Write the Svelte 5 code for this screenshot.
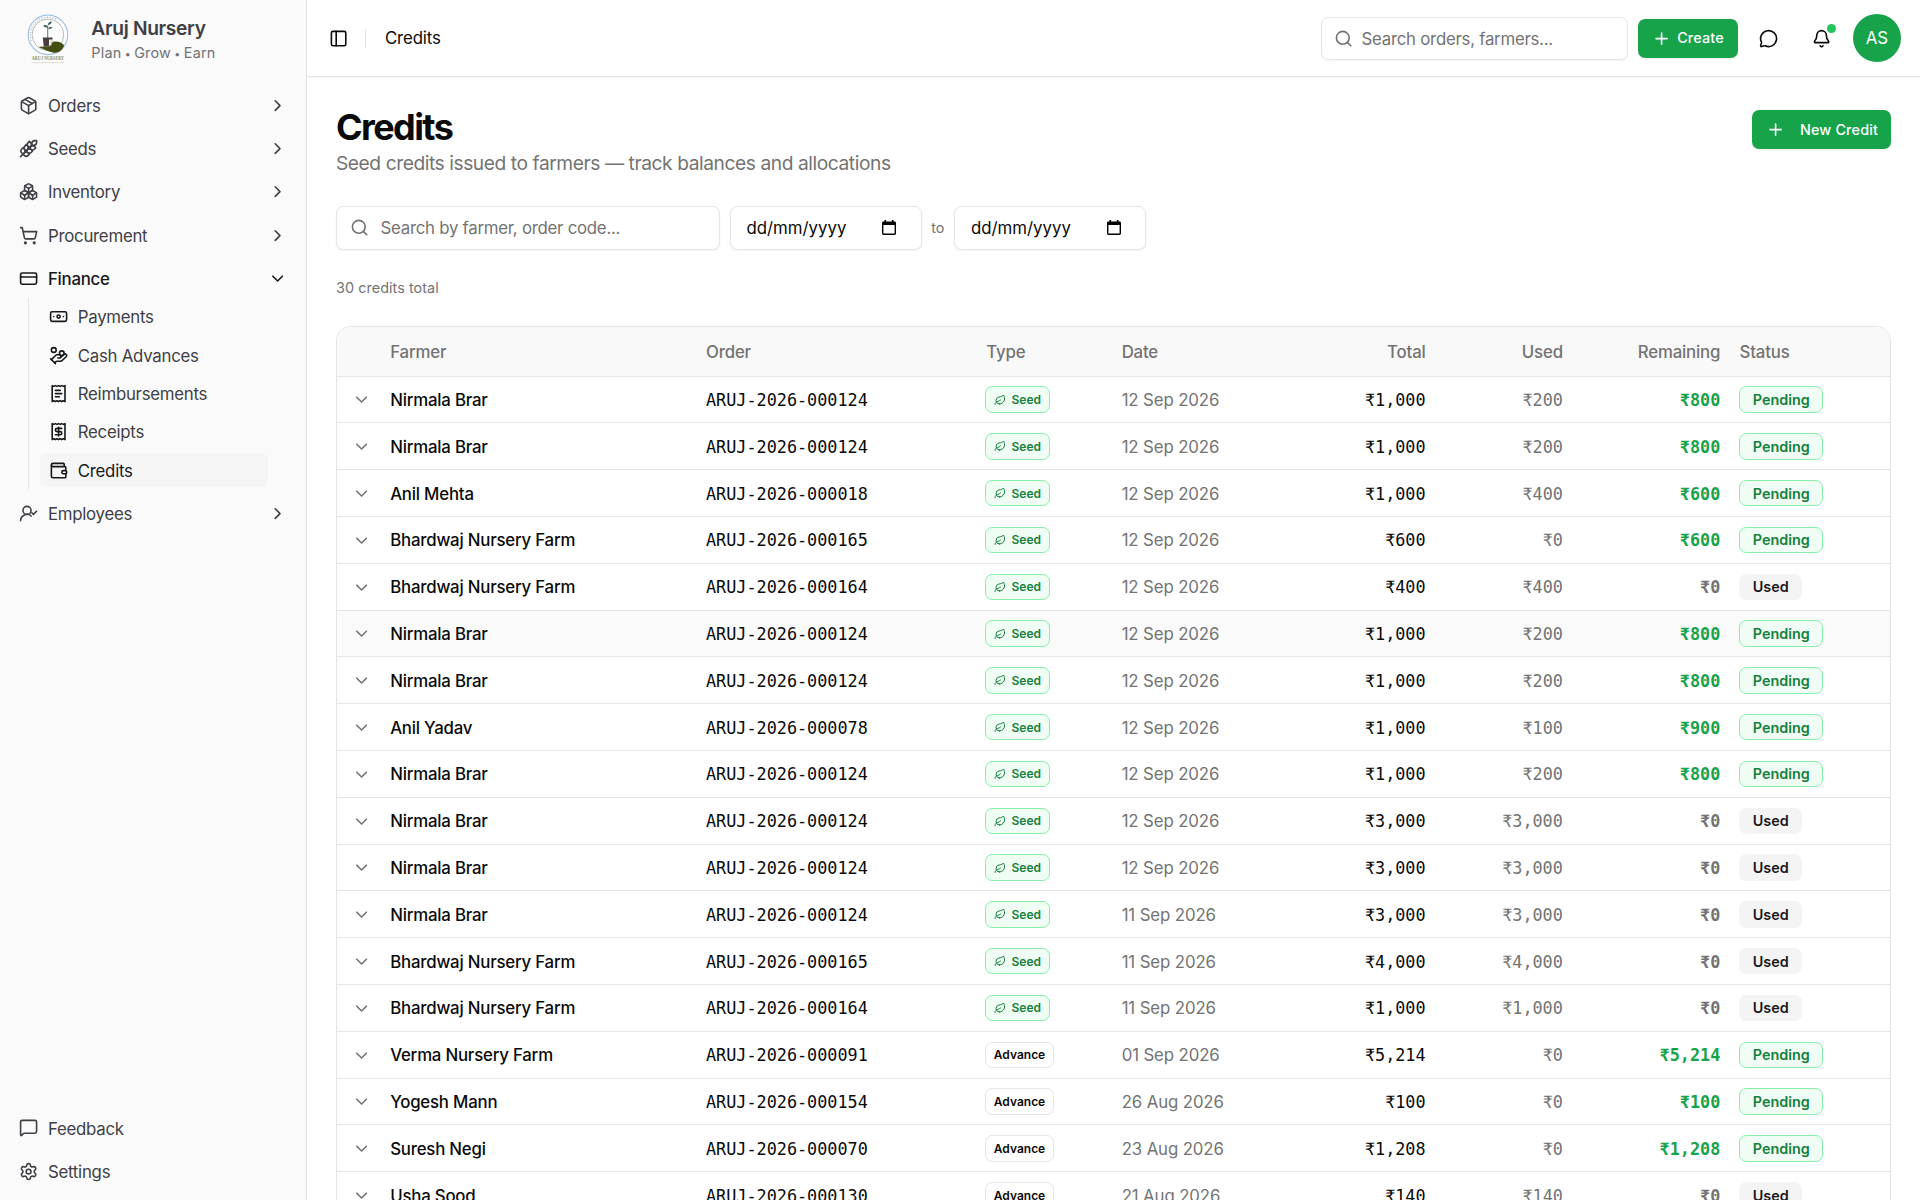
<script lang="ts">
  interface Credit {
    farmer: string;
    order: string;
    type: 'Seed' | 'Advance';
    date: string;
    total: number;
    used: number;
  }

  const icons: Record<string, string> = {
    package: '<path d="M11 21.73a2 2 0 0 0 2 0l7-4A2 2 0 0 0 21 16V8a2 2 0 0 0-1-1.73l-7-4a2 2 0 0 0-2 0l-7 4A2 2 0 0 0 3 8v8a2 2 0 0 0 1 1.73z"/><path d="M12 22V12"/><path d="m3.3 7 8.7 5 8.7-5"/><path d="m7.5 4.27 9 5.15"/>',
    wheat: '<path d="M2 22 16 8"/><path d="M3.47 12.53 5 11l1.53 1.53a3.5 3.5 0 0 1 0 4.94L5 19l-1.53-1.53a3.5 3.5 0 0 1 0-4.94Z"/><path d="M7.47 8.53 9 7l1.53 1.53a3.5 3.5 0 0 1 0 4.94L9 15l-1.53-1.53a3.5 3.5 0 0 1 0-4.94Z"/><path d="M11.47 4.53 13 3l1.53 1.53a3.5 3.5 0 0 1 0 4.94L13 11l-1.53-1.53a3.5 3.5 0 0 1 0-4.94Z"/><path d="M20 2h2v2a4 4 0 0 1-4 4h-2V6a4 4 0 0 1 4-4Z"/><path d="M11.47 17.47 13 19l-1.53 1.53a3.5 3.5 0 0 1-4.94 0L5 19l1.53-1.53a3.5 3.5 0 0 1 4.94 0Z"/><path d="M15.47 13.47 17 15l-1.53 1.53a3.5 3.5 0 0 1-4.94 0L9 15l1.53-1.53a3.5 3.5 0 0 1 4.94 0Z"/><path d="M19.47 9.47 21 11l-1.53 1.53a3.5 3.5 0 0 1-4.94 0L13 11l1.53-1.53a3.5 3.5 0 0 1 4.94 0Z"/>',
    boxes: '<path d="M2.97 12.92A2 2 0 0 0 2 14.63v3.24a2 2 0 0 0 .97 1.71l3 1.8a2 2 0 0 0 2.06 0L12 19v-5.5l-5-3-4.03 2.42Z"/><path d="m7 16.5-4.74-2.85"/><path d="m7 16.5 5-3"/><path d="M7 16.5v5.17"/><path d="M12 13.5V19l3.97 2.38a2 2 0 0 0 2.06 0l3-1.8a2 2 0 0 0 .97-1.71v-3.24a2 2 0 0 0-.97-1.71L17 10.5l-5 3Z"/><path d="m17 16.5-5-3"/><path d="m17 16.5 4.74-2.85"/><path d="M17 16.5v5.17"/><path d="M7.97 4.42A2 2 0 0 0 7 6.13v4.37l5 3 5-3V6.13a2 2 0 0 0-.97-1.71l-3-1.8a2 2 0 0 0-2.06 0l-3 1.8Z"/><path d="M12 8 7.26 5.15"/><path d="m12 8 4.74-2.85"/><path d="M12 13.5V8"/>',
    cart: '<circle cx="8" cy="21" r="1"/><circle cx="19" cy="21" r="1"/><path d="M2.05 2.05h2l2.66 12.42a2 2 0 0 0 2 1.58h9.78a2 2 0 0 0 1.95-1.57l1.65-7.43H5.12"/>',
    card: '<rect width="20" height="14" x="2" y="5" rx="2"/><path d="M2 10h20"/>',
    banknote: '<rect width="20" height="12" x="2" y="6" rx="2"/><circle cx="12" cy="12" r="2"/><path d="M6 12h.01M18 12h.01"/>',
    handCoins: '<path d="M11 15h2a2 2 0 1 0 0-4h-3c-.6 0-1.1.2-1.4.6L3 17"/><path d="m7 21 1.6-1.4c.3-.4.8-.6 1.4-.6h4c1.1 0 2.1-.4 2.8-1.2l4.6-4.4a2 2 0 0 0-2.75-2.91l-4.2 3.9"/><path d="m2 16 6 6"/><circle cx="16" cy="9" r="2.9"/><circle cx="6" cy="5" r="3"/>',
    receiptText: '<path d="M4 2v20l2-1 2 1 2-1 2 1 2-1 2 1 2-1 2 1V2l-2 1-2-1-2 1-2-1-2 1-2-1-2 1Z"/><path d="M14 8H8"/><path d="M16 12H8"/><path d="M13 16H8"/>',
    receipt: '<path d="M4 2v20l2-1 2 1 2-1 2 1 2-1 2 1 2-1 2 1V2l-2 1-2-1-2 1-2-1-2 1-2-1-2 1Z"/><path d="M16 8h-6a2 2 0 1 0 0 4h4a2 2 0 1 1 0 4H8"/><path d="M12 17.5v-11"/>',
    wallet: '<path d="M19 7V4a1 1 0 0 0-1-1H5a2 2 0 0 0 0 4h15a1 1 0 0 1 1 1v4h-3a2 2 0 0 0 0 4h3a1 1 0 0 0 1-1v-2a1 1 0 0 0-1-1"/><path d="M3 5v14a2 2 0 0 0 2 2h15a1 1 0 0 0 1-1v-4"/>',
    userCheck: '<path d="M2 21a8 8 0 0 1 13.292-6"/><circle cx="10" cy="8" r="5"/><path d="m16 11 2 2 4-4"/>',
    message: '<path d="M22 17a2 2 0 0 1-2 2H6.828a2 2 0 0 0-1.414.586l-2.202 2.202A.71.71 0 0 1 2 21.286V5a2 2 0 0 1 2-2h16a2 2 0 0 1 2 2z"/>',
    settings: '<path d="M9.671 4.136a2.34 2.34 0 0 1 4.659 0 2.34 2.34 0 0 0 3.319 1.915 2.34 2.34 0 0 1 2.33 4.033 2.34 2.34 0 0 0 0 3.831 2.34 2.34 0 0 1-2.33 4.033 2.34 2.34 0 0 0-3.319 1.915 2.34 2.34 0 0 1-4.659 0 2.34 2.34 0 0 0-3.32-1.915 2.34 2.34 0 0 1-2.33-4.033 2.34 2.34 0 0 0 0-3.831A2.34 2.34 0 0 1 6.35 6.051a2.34 2.34 0 0 0 3.319-1.915"/><circle cx="12" cy="12" r="3"/>',
    chevronRight: '<path d="m9 18 6-6-6-6"/>',
    chevronDown: '<path d="m6 9 6 6 6-6"/>',
    panel: '<rect width="18" height="18" x="3" y="3" rx="2"/><path d="M9 3v18"/>',
    search: '<path d="m21 21-4.34-4.34"/><circle cx="11" cy="11" r="8"/>',
    plus: '<path d="M5 12h14"/><path d="M12 5v14"/>',
    chat: '<path d="M2.992 16.342a2 2 0 0 1 .094 1.167l-1.065 3.29a1 1 0 0 0 1.236 1.168l3.413-.998a2 2 0 0 1 1.099.092 10 10 0 1 0-4.777-4.719"/>',
    bell: '<path d="M10.268 21a2 2 0 0 0 3.464 0"/><path d="M3.262 15.326A1 1 0 0 0 4 17h16a1 1 0 0 0 .74-1.673C19.41 13.956 18 12.499 18 8A6 6 0 0 0 6 8c0 4.499-1.411 5.956-2.738 7.326"/>',
    leaf: '<path d="M11 20A7 7 0 0 1 9.8 6.1C15.5 5 17 4.48 19 2c1 2 2 4.18 2 8 0 5.5-4.78 10-10 10Z"/><path d="M2 21c0-3 1.85-5.36 5.08-6C9.5 14.52 12 13 13 12"/>'
  };

  const mainNav = [
    { label: 'Orders', icon: 'package' },
    { label: 'Seeds', icon: 'wheat' },
    { label: 'Inventory', icon: 'boxes' },
    { label: 'Procurement', icon: 'cart' },
    {
      label: 'Finance',
      icon: 'card',
      children: [
        { label: 'Payments', icon: 'banknote' },
        { label: 'Cash Advances', icon: 'handCoins' },
        { label: 'Reimbursements', icon: 'receiptText' },
        { label: 'Receipts', icon: 'receipt' },
        { label: 'Credits', icon: 'wallet' }
      ]
    },
    { label: 'Employees', icon: 'userCheck' }
  ];

  const footerNav = [
    { label: 'Feedback', icon: 'message' },
    { label: 'Settings', icon: 'settings' }
  ];

  const credits: Credit[] = [
    { farmer: 'Nirmala Brar', order: 'ARUJ-2026-000124', type: 'Seed', date: '12 Sep 2026', total: 1000, used: 200 },
    { farmer: 'Nirmala Brar', order: 'ARUJ-2026-000124', type: 'Seed', date: '12 Sep 2026', total: 1000, used: 200 },
    { farmer: 'Anil Mehta', order: 'ARUJ-2026-000018', type: 'Seed', date: '12 Sep 2026', total: 1000, used: 400 },
    { farmer: 'Bhardwaj Nursery Farm', order: 'ARUJ-2026-000165', type: 'Seed', date: '12 Sep 2026', total: 600, used: 0 },
    { farmer: 'Bhardwaj Nursery Farm', order: 'ARUJ-2026-000164', type: 'Seed', date: '12 Sep 2026', total: 400, used: 400 },
    { farmer: 'Nirmala Brar', order: 'ARUJ-2026-000124', type: 'Seed', date: '12 Sep 2026', total: 1000, used: 200 },
    { farmer: 'Nirmala Brar', order: 'ARUJ-2026-000124', type: 'Seed', date: '12 Sep 2026', total: 1000, used: 200 },
    { farmer: 'Anil Yadav', order: 'ARUJ-2026-000078', type: 'Seed', date: '12 Sep 2026', total: 1000, used: 100 },
    { farmer: 'Nirmala Brar', order: 'ARUJ-2026-000124', type: 'Seed', date: '12 Sep 2026', total: 1000, used: 200 },
    { farmer: 'Nirmala Brar', order: 'ARUJ-2026-000124', type: 'Seed', date: '12 Sep 2026', total: 3000, used: 3000 },
    { farmer: 'Nirmala Brar', order: 'ARUJ-2026-000124', type: 'Seed', date: '12 Sep 2026', total: 3000, used: 3000 },
    { farmer: 'Nirmala Brar', order: 'ARUJ-2026-000124', type: 'Seed', date: '11 Sep 2026', total: 3000, used: 3000 },
    { farmer: 'Bhardwaj Nursery Farm', order: 'ARUJ-2026-000165', type: 'Seed', date: '11 Sep 2026', total: 4000, used: 4000 },
    { farmer: 'Bhardwaj Nursery Farm', order: 'ARUJ-2026-000164', type: 'Seed', date: '11 Sep 2026', total: 1000, used: 1000 },
    { farmer: 'Verma Nursery Farm', order: 'ARUJ-2026-000091', type: 'Advance', date: '01 Sep 2026', total: 5214, used: 0 },
    { farmer: 'Yogesh Mann', order: 'ARUJ-2026-000154', type: 'Advance', date: '26 Aug 2026', total: 100, used: 0 },
    { farmer: 'Suresh Negi', order: 'ARUJ-2026-000070', type: 'Advance', date: '23 Aug 2026', total: 1208, used: 0 },
    { farmer: 'Usha Sood', order: 'ARUJ-2026-000130', type: 'Advance', date: '21 Aug 2026', total: 140, used: 140 }
  ];

  let openGroup = $state('Finance');
  let activeItem = $state('Credits');
  let highlightedRow = $state(5);

  function toggleGroup(label: string) {
    openGroup = openGroup === label ? '' : label;
  }

  function rupees(value: number) {
    return '₹' + value.toLocaleString('en-IN');
  }
</script>

{#snippet icon(name: string, cls = '')}
  <svg class="icon {cls}" viewBox="0 0 24 24">{@html icons[name]}</svg>
{/snippet}

{#snippet dateField()}
  <div class="field date-field">
    <span>dd/mm/yyyy</span>
    <svg class="calendar" viewBox="0 0 14 15">
      <path fill-rule="evenodd" d="M2.5 0h1.6v1.4h5.8V0h1.6v1.4h1.1A1.4 1.4 0 0 1 14 2.8v10.8a1.4 1.4 0 0 1-1.4 1.4H1.4A1.4 1.4 0 0 1 0 13.6V2.8A1.4 1.4 0 0 1 1.4 1.4h1.1zM1.4 5v8.6h11.200V5z" />
    </svg>
  </div>
{/snippet}

<div class="app">
  <aside class="sidebar">
    <div class="brand">
      <svg class="logo" viewBox="0 0 48 48">
        <circle cx="24" cy="20" r="19" fill="#fefefe" stroke="#a9c3e6" stroke-width="1.2" />
        <circle cx="24" cy="20" r="15.2" fill="none" stroke="#b4b5b1" stroke-width="0.9" />
        <path d="M8 26a17.200 17.200 0 0 1 24-21" fill="none" stroke="#c0c4c8" stroke-width="1.400" stroke-dasharray="1.200 1.400" />
        <path d="M23.800 24v-13" stroke="#6b7467" stroke-width="1" fill="none" />
        <path d="M24 13c-4 .4-4.500-2-4.500-2 2.500-1.200 4.500 0 4.500 2zm0-2.500c0-3 3.500-3.500 3.500-3.500s.6 3.500-3.500 3.500zm.4 4c2.500.4 4-1.500 4-1.500-2-1.500-3.800-.4-4 1.500z" fill="#44685a" />
        <path d="M19 22.500h9.500l-1.200 9h-7.300z" fill="#4a3d40" />
        <path d="M15 32c3-1.400 7-.5 10-.2 2.500-.8 2-4.800 5-5.300 4-.6 7.500 1 9.500 3.500-1 5-6 7.700-10 7.200-5-.8-9-3.200-14.500-5.200z" fill="#454e12" />
        <path d="M25 24.500h3l-.8 5.500-2.200.8z" fill="#eef0e4" />
        <text x="24" y="44.500" text-anchor="middle" textLength="31" lengthAdjust="spacingAndGlyphs">ARUJ NURSERY</text>
        <path d="M9 46.800h30" stroke="#d3d5c8" stroke-width=".8" />
      </svg>
      <div class="brand-text">
        <span class="brand-name">Aruj Nursery</span>
        <span class="brand-tagline">Plan <i>•</i> Grow <i>•</i> Earn</span>
      </div>
    </div>

    <nav class="nav">
      {#each mainNav as item}
        <button
          class="nav-item"
          class:open={item.children && openGroup === item.label}
          onclick={() => toggleGroup(item.label)}
        >
          {@render icon(item.icon)}
          <span>{item.label}</span>
          {@render icon(item.children && openGroup === item.label ? 'chevronDown' : 'chevronRight', 'chevron')}
        </button>
        {#if item.children && openGroup === item.label}
          <div class="sub-nav">
            {#each item.children as child}
              <button
                class="sub-item"
                class:active={activeItem === child.label}
                onclick={() => (activeItem = child.label)}
              >
                {@render icon(child.icon)}
                <span>{child.label}</span>
              </button>
            {/each}
          </div>
        {/if}
      {/each}
    </nav>

    <nav class="nav nav-footer">
      {#each footerNav as item}
        <button class="nav-item">
          {@render icon(item.icon)}
          <span>{item.label}</span>
        </button>
      {/each}
    </nav>
  </aside>

  <div class="page">
    <header class="topbar">
      <button class="icon-button toggle" aria-label="Toggle sidebar">{@render icon('panel')}</button>
      <div class="separator"></div>
      <span class="crumb">Credits</span>
      <div class="topbar-actions">
        <div class="field global-search">
          {@render icon('search')}
          <span>Search orders, farmers...</span>
        </div>
        <button class="primary create">{@render icon('plus')}<span>Create</span></button>
        <button class="icon-button" aria-label="Messages">{@render icon('chat')}</button>
        <button class="icon-button" aria-label="Notifications">
          {@render icon('bell')}
          <span class="dot"></span>
        </button>
        <div class="avatar">AS</div>
      </div>
    </header>

    <main class="content">
      <div class="heading">
        <div>
          <h1>Credits</h1>
          <p>Seed credits issued to farmers — track balances and allocations</p>
        </div>
        <button class="primary new-credit">{@render icon('plus')}<span>New Credit</span></button>
      </div>

      <div class="filters">
        <div class="field farmer-search">
          {@render icon('search')}
          <span>Search by farmer, order code...</span>
        </div>
        {@render dateField()}
        <span class="to">to</span>
        {@render dateField()}
      </div>

      <p class="count">30 credits total</p>

      <div class="table-wrap">
        <table>
          <colgroup>
            <col class="c-toggle" />
            <col class="c-farmer" />
            <col class="c-order" />
            <col class="c-type" />
            <col class="c-date" />
            <col class="c-total" />
            <col class="c-used" />
            <col class="c-remaining" />
            <col />
          </colgroup>
          <thead>
            <tr>
              <th></th>
              <th>Farmer</th>
              <th>Order</th>
              <th>Type</th>
              <th>Date</th>
              <th class="num">Total</th>
              <th class="num">Used</th>
              <th class="num">Remaining</th>
              <th>Status</th>
            </tr>
          </thead>
          <tbody>
            {#each credits as credit, index}
              {@const remaining = credit.total - credit.used}
              <tr class:hovered={highlightedRow === index} onmouseenter={() => (highlightedRow = index)}>
                <td class="expand">{@render icon('chevronDown')}</td>
                <td class="farmer">{credit.farmer}</td>
                <td class="mono order">{credit.order}</td>
                <td class="type">
                  {#if credit.type === 'Seed'}
                    <span class="badge small green">{@render icon('leaf')}Seed</span>
                  {:else}
                    <span class="badge small outline">Advance</span>
                  {/if}
                </td>
                <td class="date muted">{credit.date}</td>
                <td class="num mono">{rupees(credit.total)}</td>
                <td class="num mono muted">{rupees(credit.used)}</td>
                <td class="num mono remaining" class:positive={remaining > 0}>{rupees(remaining)}</td>
                <td class="status">
                  {#if remaining > 0}
                    <span class="badge green">Pending</span>
                  {:else}
                    <span class="badge gray">Used</span>
                  {/if}
                </td>
              </tr>
            {/each}
          </tbody>
        </table>
      </div>
    </main>
  </div>
</div>

<style>
  :global(html) {
    font-size: 19.2px;
  }

  :global(body) {
    margin: 0;
    overflow: hidden;
  }

  .app {
    display: flex;
    height: 100vh;
    overflow: hidden;
    background: #fff;
    color: #0a0a0a;
    font-family: Inter, 'Noto Sans', sans-serif;
    font-size: 0.875rem;
    line-height: 1.25rem;
  }

  .app * {
    box-sizing: border-box;
  }

  button {
    border: 0;
    margin: 0;
    padding: 0;
    background: none;
    color: inherit;
    font: inherit;
    cursor: pointer;
  }

  .icon {
    width: 1rem;
    height: 1rem;
    flex-shrink: 0;
    fill: none;
    stroke: currentColor;
    stroke-width: 2;
    stroke-linecap: round;
    stroke-linejoin: round;
  }

  /* Sidebar */
  .sidebar {
    display: flex;
    flex-direction: column;
    width: 16rem;
    flex-shrink: 0;
    background: #fafafa;
    border-right: 1px solid #e5e5e5;
    color: #3f3f46;
    letter-spacing: -0.015em;
  }

  .brand {
    display: flex;
    align-items: center;
    height: 4rem;
    padding: 1px 0.5rem 0 1.18rem;
    gap: 0.98rem;
  }

  .logo {
    width: 2.6rem;
    height: 2.6rem;
  }

  .logo text {
    font-family: 'Liberation Serif', serif;
    font-size: 5px;
    font-weight: 700;
    letter-spacing: 0;
    fill: #8a9268;
  }

  .brand-text {
    display: flex;
    flex-direction: column;
  }

  .brand-name {
    font-size: 1rem;
    font-weight: 600;
    line-height: 1.5rem;
    letter-spacing: -0.017em;
  }

  .brand-tagline {
    font-size: 0.75rem;
    line-height: 1rem;
    color: #737373;
    letter-spacing: 0.015em;
  }

  .brand-tagline i {
    margin: 0 -1px;
    font-size: 0.55rem;
    font-style: normal;
  }

  .nav {
    display: flex;
    flex-direction: column;
    gap: 0.25rem;
    padding: 0.5rem;
  }

  .nav-footer {
    margin-top: auto;
  }

  .nav-item {
    display: flex;
    align-items: center;
    gap: 0.5rem;
    height: 2rem;
    padding: 0 0.5rem;
    border-radius: 0.375rem;
    letter-spacing: inherit;
  }

  .nav-item span,
  .sub-item span,
  .field span {
    padding-top: 1px;
  }

  .nav-item :global(.chevron) {
    margin-left: auto;
  }

  .nav-item.open {
    color: #18181b;
    font-weight: 500;
  }

  .sub-nav {
    display: flex;
    flex-direction: column;
    gap: 0.25rem;
    margin: -0.25rem 0.81rem 0 0.94rem;
    padding: 0.125rem 0.7rem 0.125rem 0.6rem;
    border-left: 1px solid #e5e5e5;
  }

  .sub-item {
    display: flex;
    align-items: center;
    gap: 0.5rem;
    height: 1.75rem;
    padding: 0 0.46rem;
    border-radius: 0.375rem;
    letter-spacing: inherit;
  }

  .sub-item .icon {
    color: #18181b;
  }

  .sub-item.active {
    background: #f5f5f5;
    color: #18181b;
  }

  /* Top bar */
  .page {
    display: flex;
    flex-direction: column;
    flex: 1;
    min-width: 0;
  }

  .topbar {
    display: flex;
    align-items: center;
    height: 4rem;
    flex-shrink: 0;
    padding: 1px 1rem 0;
    border-bottom: 1px solid #e5e5e5;
    box-shadow: 0 1px 2px rgba(0, 0, 0, 0.05);
  }

  .crumb {
    letter-spacing: -0.008em;
  }

  .icon-button {
    position: relative;
    display: flex;
    align-items: center;
    justify-content: center;
    width: 2.25rem;
    height: 2.25rem;
  }

  .toggle {
    width: 1.75rem;
    margin-left: -0.25rem;
  }

  .separator {
    width: 1px;
    height: 1rem;
    margin: 0 1rem 0 0.5rem;
    background: #e5e5e5;
  }

  .topbar-actions {
    display: flex;
    align-items: center;
    gap: 0.5rem;
    margin-left: auto;
  }

  .field {
    display: flex;
    align-items: center;
    height: 2.25rem;
    border: 1px solid #e5e5e5;
    border-radius: 0.375rem;
    background: #fff;
    color: #737373;
    letter-spacing: -0.015em;
    box-shadow: 0 1px 2px rgba(0, 0, 0, 0.05);
    white-space: nowrap;
  }

  .global-search {
    width: 16rem;
    padding-left: 0.6rem;
    gap: 0.46rem;
  }

  .primary {
    display: flex;
    align-items: center;
    height: 2rem;
    border-radius: 0.375rem;
    background: #16a34a;
    color: #fff;
    font-size: 0.75rem;
    font-weight: 500;
    letter-spacing: 0.01em;
    white-space: nowrap;
    box-shadow: 0 1px 2px rgba(0, 0, 0, 0.08);
  }

  .create {
    width: 5.2rem;
    padding-left: 0.75rem;
    gap: 0.3rem;
  }

  .dot {
    position: absolute;
    top: 0.37rem;
    right: 0.37rem;
    width: 0.5rem;
    height: 0.5rem;
    border-radius: 50%;
    background: #22c55e;
  }

  .avatar {
    display: flex;
    align-items: center;
    justify-content: center;
    width: 2.5rem;
    height: 2.5rem;
    border-radius: 50%;
    background: #16a34a;
    color: #fff;
  }

  /* Content */
  .content {
    display: flex;
    flex-direction: column;
    gap: 1.5rem;
    padding: 1.5rem;
  }

  .heading {
    display: flex;
    justify-content: space-between;
    align-items: flex-start;
  }

  h1 {
    margin: 0;
    font-size: 1.875rem;
    font-weight: 700;
    line-height: 2.25rem;
    letter-spacing: -0.044em;
  }

  .heading p {
    margin: 0;
    padding-top: 1px;
    font-size: 1rem;
    line-height: calc(1.5rem - 1px);
    color: #737373;
    letter-spacing: -0.0225em;
  }

  .new-credit {
    width: 7.25rem;
    margin-top: 0.25rem;
    padding-left: 0.75rem;
    gap: 0.75rem;
  }

  .filters {
    display: flex;
    align-items: center;
    gap: 0.5rem;
  }

  .farmer-search {
    width: 20rem;
    padding-left: 0.7rem;
    gap: 0.57rem;
  }

  .date-field {
    justify-content: space-between;
    width: 10rem;
    padding: 0 1.27rem 0 0.83rem;
    color: #0a0a0a;
    letter-spacing: 0;
  }

  .calendar {
    width: 14px;
    height: 15px;
  }

  .to,
  .count {
    margin: 0;
    font-size: 0.75rem;
    line-height: 1rem;
    color: #737373;
    letter-spacing: 0.004em;
  }

  .table-wrap {
    border: 1px solid #e5e5e5;
    border-radius: 0.75rem;
    overflow: hidden;
  }

  table {
    width: 100%;
    table-layout: fixed;
    border-collapse: separate;
    border-spacing: 0;
  }

  .c-toggle { width: 2.27rem; }
  .c-farmer { width: 16.45rem; }
  .c-order { width: 14.6rem; }
  .c-type { width: 7.05rem; }
  .c-date { width: 10rem; }
  .c-total { width: 6.83rem; }
  .c-used { width: 7.15rem; }
  .c-remaining { width: 8.2rem; }

  th {
    height: 2.5625rem;
    padding: 1px 0.5rem 0;
    background: #f9f9fa;
    border-bottom: 1px solid #e5e5e5;
    color: #737373;
    font-weight: 500;
    letter-spacing: -0.01em;
    text-align: left;
  }

  td {
    height: 2.4375rem;
    padding: 1px 0.5rem 0;
    border-bottom: 1px solid #e5e5e5;
    white-space: nowrap;
  }

  tr.hovered td {
    background: #fafafa;
  }

  .num {
    text-align: right;
  }

  .expand {
    color: #737373;
    padding-left: 0.78rem;
  }

  .expand .icon {
    display: block;
  }

  .farmer {
    font-weight: 500;
    letter-spacing: -0.012em;
  }

  .date {
    letter-spacing: -0.007em;
  }

  .type {
    padding-top: 0;
    padding-left: 0.44rem;
  }

  .status {
    padding-top: 0;
  }

  .mono {
    font-family: 'DejaVu Sans Mono', monospace;
  }

  .muted,
  .remaining {
    color: #737373;
  }

  .remaining {
    font-weight: 700;
  }

  .remaining.positive {
    color: #16a34a;
  }

  .badge {
    display: inline-flex;
    align-items: center;
    height: 1.375rem;
    padding: 0 0.64rem;
    border: 1px solid transparent;
    border-radius: 0.375rem;
    font-size: 0.75rem;
    font-weight: 600;
    line-height: 1rem;
    vertical-align: middle;
  }

  .badge.small {
    gap: 0.3rem;
    padding: 0 0.4rem;
    font-size: 0.625rem;
  }

  .badge.small .icon {
    width: 0.625rem;
    height: 0.625rem;
  }

  .badge.green {
    background: #f0fdf4;
    border-color: #86efac;
    color: #15803d;
  }

  .badge.outline {
    border-color: #e5e5e5;
  }

  .badge.gray {
    background: #f4f4f5;
    color: #18181b;
  }
</style>
